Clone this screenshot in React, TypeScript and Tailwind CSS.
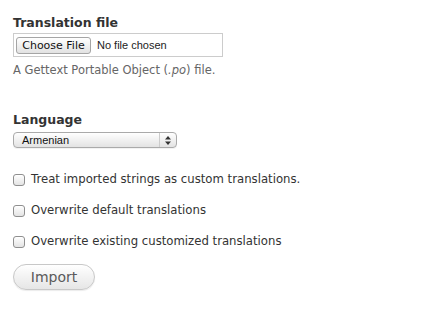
import { useState } from "react";

const options = ["Armenian", "English", "French", "German"];

function Check({ label }: { label: string }) {
  const [on, setOn] = useState(false);
  return (
    <label className="flex items-center gap-[6px] h-[16px] text-[11.7px] text-[#333]">
      <input
        type="checkbox"
        checked={on}
        onChange={() => setOn(!on)}
        className="appearance-none w-[12px] h-[12px] rounded-[3px] border border-[#8f8f8f] bg-gradient-to-b from-white to-[#e4e4e4] shadow-[inset_0_1px_0_#fff] checked:bg-[#4a8ce8] m-0"
      />
      <span>{label}</span>
    </label>
  );
}

export default function App() {
  return (
    <div className="w-[432px] h-[309px] bg-white font-['DejaVu_Sans',sans-serif] pl-[13px] pt-[14px]">
      <div className="flex flex-col">
        <span className="text-[12.5px] font-bold text-[#333] leading-[18px]">Translation file</span>
        <div className="mt-[1px] w-[210px] h-[24px] border border-[#ccc] flex items-center pl-[2px] gap-[6px]">
          <button className="h-[17px] w-[75px] rounded-[3px] border border-[#a5a5a5] bg-gradient-to-b from-white to-[#e2e2e2] text-[11px] leading-none text-[#111]">
            Choose File
          </button>
          <span className="text-[11px] text-[#222] font-['Liberation_Sans',sans-serif]">No file chosen</span>
        </div>
        <p className="mt-[5px] text-[11.5px] text-[#666] leading-[16px]">
          A Gettext Portable Object (<em>.po</em>) file.
        </p>
      </div>

      <div className="flex flex-col mt-[33px]">
        <span className="text-[12.5px] font-bold text-[#333] leading-[18px]">Language</span>
        <div className="mt-[3px] w-[164px] h-[16px] rounded-[4px] border border-[#aaa] bg-gradient-to-b from-white to-[#e3e3e3] flex items-center justify-between pl-[8px] pr-[5px] shadow-[0_1px_0_rgba(0,0,0,0.05)]">
          <span className="text-[11px] text-[#111] font-['Liberation_Sans',sans-serif] leading-none">{options[0]}</span>
          <div className="flex items-center h-full border-l border-[#ccc] pl-[5px]">
            <svg width="6" height="9" viewBox="0 0 6 9">
              <path d="M3 0L6 3.5H0z" fill="#333" />
              <path d="M3 9L6 5.5H0z" fill="#333" />
            </svg>
          </div>
        </div>
      </div>

      <div className="flex flex-col gap-[15px] mt-[24px]">
        <Check label="Treat imported strings as custom translations." />
        <Check label="Overwrite default translations" />
        <Check label="Overwrite existing customized translations" />
      </div>

      <button className="mt-[14px] w-[82px] h-[26px] rounded-full border border-[#c8c8c8] bg-gradient-to-b from-white to-[#e6e6e6] text-[14px] text-[#5a5a5a] shadow-[0_1px_1px_rgba(0,0,0,0.08)]">
        Import
      </button>
    </div>
  );
}
